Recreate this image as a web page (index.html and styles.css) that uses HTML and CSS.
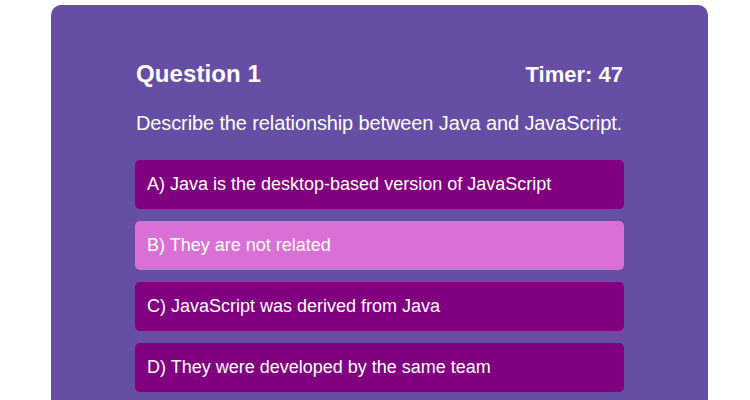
FILE: index.html
```html
<!DOCTYPE html>
<html lang="en">
<head>
<meta charset="utf-8">
<title>Quiz</title>
<link rel="stylesheet" href="styles.css">
</head>
<body>
<div class="card">
  <div class="header">
    <h2 class="title">Question 1</h2>
    <div class="timer">Timer: 47</div>
  </div>
  <p class="question">Describe the relationship between Java and JavaScript.</p>
  <div class="options">
    <button class="option">A) Java is the desktop-based version of JavaScript</button>
    <button class="option selected">B) They are not related</button>
    <button class="option">C) JavaScript was derived from Java</button>
    <button class="option">D) They were developed by the same team</button>
  </div>
</div>
</body>
</html>
```

FILE: styles.css
```css
html, body {
  margin: 0;
  padding: 0;
  background: #ffffff;
  font-family: "Liberation Sans", Arial, sans-serif;
  color: #ffffff;
}

.card {
  margin: 5px 0 0 51px;
  width: 657px;
  box-sizing: border-box;
  padding: 55px 84px 40px;
  background: #654ea3;
  border-radius: 10px;
  min-height: 420px;
}

.header {
  display: flex;
  justify-content: space-between;
  align-items: baseline;
}

.title {
  margin: 0 0 0 1px;
  font-size: 24px;
  letter-spacing: 0.1px;
  line-height: 28px;
  font-weight: bold;
}

.timer {
  font-size: 22px;
  font-weight: bold;
  line-height: 28px;
  margin-right: 1px;
}

.question {
  margin: 23px 0 0 1px;
  font-size: 20px;
  line-height: 23px;
  letter-spacing: -0.12px;
  white-space: nowrap;
}

.options {
  margin-top: 25px;
  display: flex;
  flex-direction: column;
  gap: 12px;
}

.option {
  display: block;
  width: 100%;
  height: 49px;
  padding: 0 12px;
  border: none;
  border-radius: 5px;
  background: #800080;
  color: #ffffff;
  font-family: "Liberation Sans", Arial, sans-serif;
  font-size: 18px;
  line-height: 21px;
  text-align: left;
}

.option.selected {
  background: #da70d6;
}
```
